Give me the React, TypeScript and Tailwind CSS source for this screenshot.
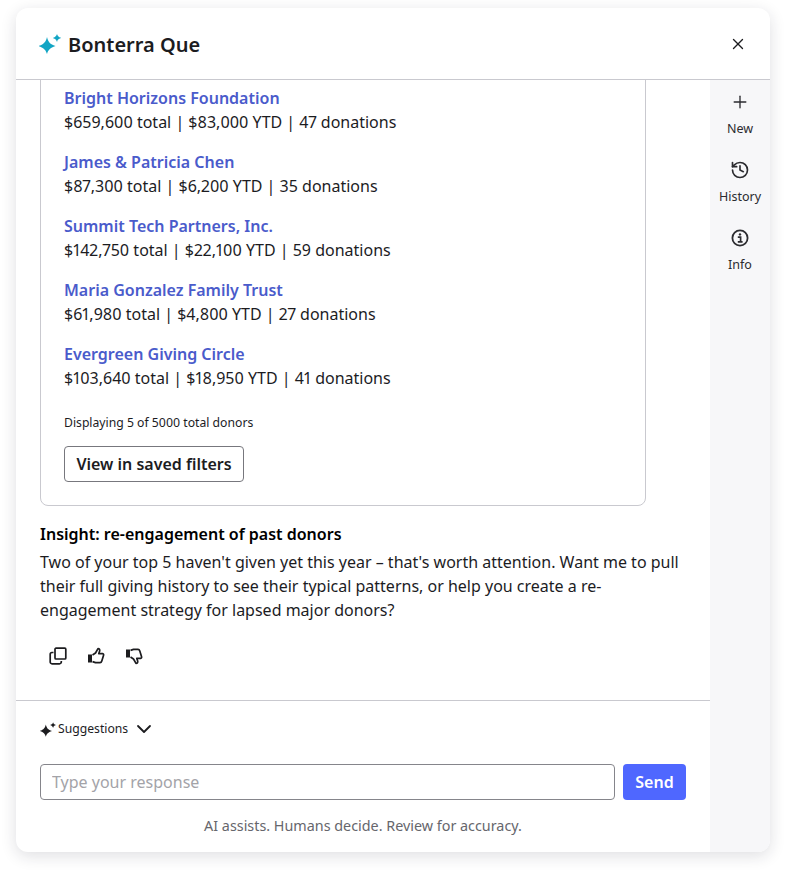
import { History, Plus, X, ChevronDown } from 'lucide-react'

const donors = [
  { name: 'Bright Horizons Foundation', stats: '$659,600 total | $83,000 YTD | 47 donations' },
  { name: 'James & Patricia Chen', stats: '$87,300 total | $6,200 YTD | 35 donations' },
  { name: 'Summit Tech Partners, Inc.', stats: '$142,750 total | $22,100 YTD | 59 donations' },
  { name: 'Maria Gonzalez Family Trust', stats: '$61,980 total | $4,800 YTD | 27 donations' },
  { name: 'Evergreen Giving Circle', stats: '$103,640 total | $18,950 YTD | 41 donations' },
]

function Sparkle({ className }: { className: string }) {
  return (
    <svg viewBox="0 0 22 20" className={className} fill="currentColor">
      <path d="M8 3 C9.2 8 11 10.2 16.5 12 C11 13.8 9.2 16 8 20 C6.8 16 5 13.8 -0.5 12 C5 10.2 6.8 8 8 3 Z" />
      <path d="M18 0 C18.5 2 19.5 3 22.2 3.9 C19.5 4.8 18.5 5.8 18 8 C17.5 5.8 16.5 4.8 13.8 3.9 C16.5 3 17.5 2 18 0 Z" />
    </svg>
  )
}

function CopyIcon() {
  return (
    <svg viewBox="0 0 18 18" className="w-[18px] h-[18px]" fill="none" stroke="currentColor" strokeWidth="1.7">
      <rect x="6" y="1.2" width="10.8" height="10.8" rx="1" />
      <path d="M4.5 5.5 H3 a1.8 1.8 0 0 0 -1.8 1.8 V15 a1.8 1.8 0 0 0 1.8 1.8 H10.5 a1.8 1.8 0 0 0 1.8 -1.8 V14" />
    </svg>
  )
}

function Thumb({ down }: { down?: boolean }) {
  return (
    <svg viewBox="0 0 18 18" className={`w-[18px] h-[18px] ${down ? '-scale-y-100' : ''}`} fill="none" stroke="currentColor" strokeWidth="1.7" strokeLinejoin="round">
      <rect x="1" y="7.5" width="4" height="8" fill="currentColor" stroke="none" />
      <path d="M5.5 8 L8.5 6 L11 1.6 C12.6 1.6 13 3 12.6 4.2 L11.8 6.6 L15.6 6.6 C16.6 6.8 16.8 7.6 16.5 8.6 L14.8 14 C14.5 15 13.8 15.6 13 15.6 L8.5 15.6 L5.5 14.6" />
    </svg>
  )
}

function InfoIcon() {
  return (
    <svg viewBox="0 0 18 18" className="w-[18px] h-[18px]" fill="none" stroke="currentColor">
      <circle cx="9" cy="9" r="7.6" strokeWidth="1.8" />
      <circle cx="9" cy="5.4" r="1.2" fill="currentColor" stroke="none" />
      <path d="M6.8 8.2 H9.6 V12.6 M6.8 12.8 H11.6" strokeWidth="1.7" />
    </svg>
  )
}

function RailButton({ label, children }: { label: string; children: React.ReactNode }) {
  return (
    <button className="h-[68px] flex flex-col items-center pt-[10px] text-[#2b2b2f]">
      <span className="h-6 flex items-center justify-center">{children}</span>
      <span className="text-[12.5px] leading-4 mt-[7px]">{label}</span>
    </button>
  )
}

export default function App() {
  return (
    <div className="w-[786px] h-[876px] bg-white pt-2 pl-4 font-['Noto_Sans',sans-serif] proportional-nums text-[#1c1c1f]">
      <div className="w-[754px] h-[844px] bg-white rounded-xl shadow-[0_4px_16px_rgba(30,30,50,0.14)] flex flex-col overflow-hidden">
        <header className="h-[72px] shrink-0 border-b border-[#c9c9cf] flex items-center justify-between pl-[23px] pr-5">
          <div className="flex items-center gap-[7px]">
            <Sparkle className="w-[22px] h-5 text-[#12a5c4]" />
            <h1 className="text-xl leading-7 font-semibold mt-[2px]">Bonterra Que</h1>
          </div>
          <button className="w-6 h-6 flex items-center justify-center">
            <X className="w-[18px] h-[18px]" strokeWidth={1.8} />
          </button>
        </header>

        <div className="flex-1 flex min-h-0">
          <div className="w-[694px] flex flex-col">
            <main className="h-[620px] shrink-0 overflow-hidden px-6">
              <section className="w-[606px] h-[452px] -mt-[26px] border border-[#c9c9cf] rounded-lg pl-[23px] pr-6 pt-[31px]">
                <ul className="flex flex-col gap-4">
                  {donors.map((d) => (
                    <li key={d.name} className="text-base leading-6">
                      <a className="block font-semibold text-[#4a5bcb]">{d.name}</a>
                      <p>{d.stats}</p>
                    </li>
                  ))}
                </ul>
                <p className="text-[12.2px] leading-4 mt-[25px]">Displaying 5 of 5000 total donors</p>
                <button className="mt-[15px] w-[180px] h-9 border border-[#77777d] rounded text-base font-semibold">
                  View in saved filters
                </button>
              </section>
              <h2 className="mt-4 text-base leading-6 font-semibold text-black">Insight: re-engagement of past donors</h2>
              <p className="mt-1 text-base leading-6">
                Two of your top 5 haven't given yet this year – that's worth attention. Want me to pull their full giving history to see their typical patterns, or help you create a re-engagement strategy for lapsed major donors?
              </p>
              <div className="mt-[25px] flex gap-5 pl-[9px]">
                <CopyIcon />
                <Thumb />
                <Thumb down />
              </div>
            </main>

            <footer className="flex-1 border-t border-[#c9c9cf] px-6">
              <button className="mt-4 h-6 flex items-center text-[12.2px]">
                <Sparkle className="w-4 h-[15px] mr-[2px]" />
                Suggestions
                <ChevronDown className="w-6 h-6 ml-1" strokeWidth={1.8} />
              </button>
              <div className="mt-[23px] flex gap-2">
                <input
                  placeholder="Type your response"
                  className="flex-1 h-9 border border-[#85858b] rounded px-[11px] text-base placeholder:text-[#a3a3a8] outline-none"
                />
                <button className="w-[63px] h-9 bg-[#4f67ff] rounded text-white text-base font-semibold">Send</button>
              </div>
              <p className="mt-4 text-[14.35px] leading-5 text-center text-[#66666c]">AI assists. Humans decide. Review for accuracy.</p>
            </footer>
          </div>

          <aside className="w-[60px] bg-[#f7f7f9] flex flex-col">
            <RailButton label="New"><Plus className="w-5 h-5" strokeWidth={1.6} /></RailButton>
            <RailButton label="History"><History className="w-5 h-5" strokeWidth={2} /></RailButton>
            <RailButton label="Info"><InfoIcon /></RailButton>
          </aside>
        </div>
      </div>
    </div>
  )
}
